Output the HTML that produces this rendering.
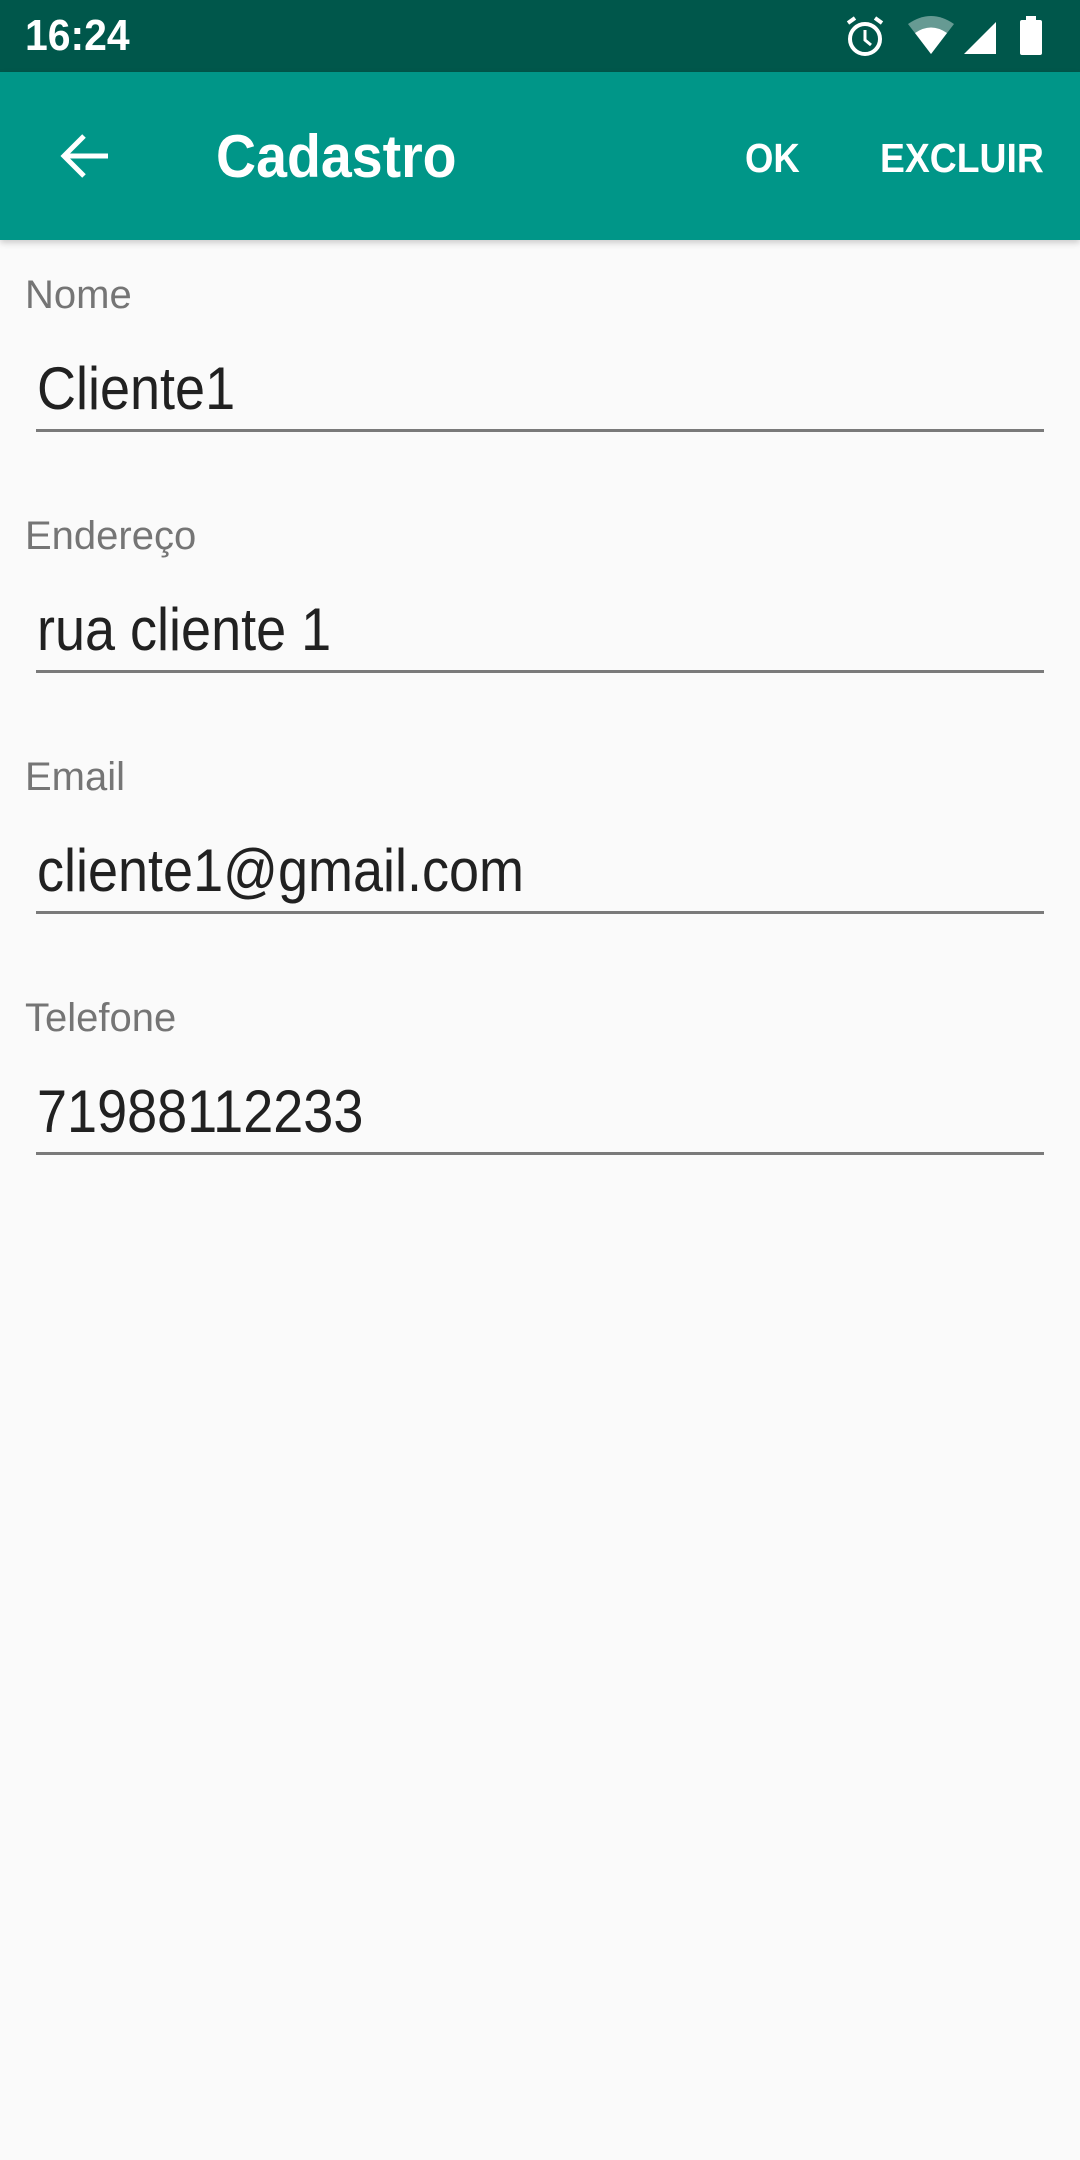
<!DOCTYPE html>
<html><head><meta charset="utf-8"><style>
body{margin:0;width:1080px;height:2160px;background:#fafafa;font-family:"Liberation Sans",sans-serif;position:relative;overflow:hidden}
.sb{position:absolute;left:0;top:0;width:1080px;height:72px;background:#00574b}
.tb{position:absolute;left:0;top:72px;width:1080px;height:168px;background:#009688;box-shadow:0 3px 6px rgba(0,0,0,.18)}
.t{position:absolute;color:#fff;white-space:nowrap;transform-origin:left center}
.lbl{position:absolute;left:25px;font-size:40px;color:#757575}
.val{position:absolute;left:37px;font-size:60px;color:#212121;transform:scaleX(.9);transform-origin:left center;white-space:nowrap}
.ln{position:absolute;left:36px;width:1008px;height:3px;background:#7a7a7a}
</style></head><body>
<div class="sb"></div>
<div class="t" style="left:25px;top:12px;font-size:44px;font-weight:bold;line-height:48px;transform:scaleX(.93)">16:24</div>
<svg style="position:absolute;left:840px;top:14px" width="210" height="48" viewBox="0 0 210 48">
 <circle cx="25" cy="25" r="15" fill="none" stroke="#fff" stroke-width="4"/>
 <path d="M25 16v10l6 5" fill="none" stroke="#fff" stroke-width="3"/>
 <path d="M8 9l7-5M42 9l-7-5" stroke="#fff" stroke-width="4"/>
 <path d="M68 10 Q91 -6 114 10 L91 40 Z" fill="#fff" opacity=".4"/>
 <path d="M75 19 Q91 8 107 19 L91 40 Z" fill="#fff"/>
 <path d="M156 8 L156 40 L124 40 Z" fill="#fff"/>
 <rect x="180" y="6" width="22" height="35" rx="2" fill="#fff"/>
 <rect x="186" y="2" width="10" height="6" fill="#fff"/>
</svg>
<div class="tb"></div>
<svg style="position:absolute;left:58px;top:132px" width="54" height="48" viewBox="0 0 54 48">
 <path d="M50 24H6M26 4L6 24l20 20" fill="none" stroke="#fff" stroke-width="5"/>
</svg>
<div class="t" style="left:216px;top:122px;font-size:60px;font-weight:bold;line-height:70px;transform:scaleX(.925)">Cadastro</div>
<div class="t" style="left:745px;top:134px;font-size:41px;font-weight:bold;line-height:48px;transform:scaleX(.89)">OK</div>
<div class="t" style="left:880px;top:134px;font-size:41px;font-weight:bold;line-height:48px;transform:scaleX(.91)">EXCLUIR</div>

<div class="lbl" style="top:273px">Nome</div>
<div class="val" style="top:354px">Cliente1</div>
<div class="ln" style="top:429px"></div>

<div class="lbl" style="top:514px">Endereço</div>
<div class="val" style="top:595px">rua cliente 1</div>
<div class="ln" style="top:670px"></div>

<div class="lbl" style="top:755px">Email</div>
<div class="val" style="top:836px">cliente1@gmail.com</div>
<div class="ln" style="top:911px"></div>

<div class="lbl" style="top:996px">Telefone</div>
<div class="val" style="top:1077px">71988112233</div>
<div class="ln" style="top:1152px"></div>
</body></html>
